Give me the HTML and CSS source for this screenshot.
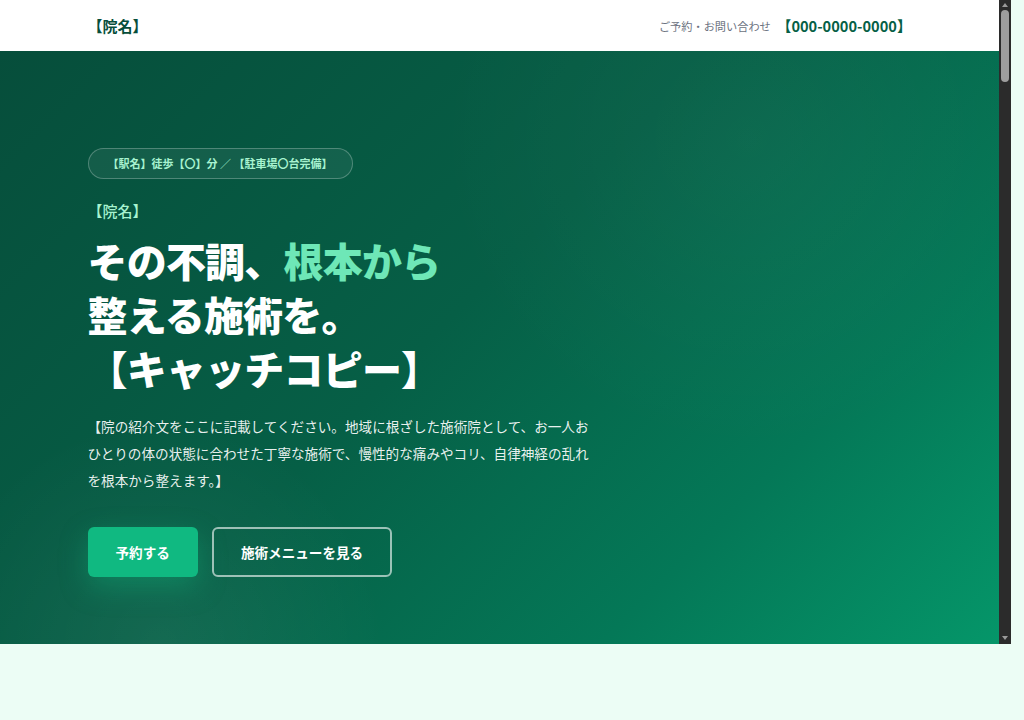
FILE: index.html
```html
<!DOCTYPE html>
<html lang="ja">
<head>
<meta charset="utf-8">
<title>【院名】</title>
<link rel="stylesheet" href="styles.css">
</head>
<body>
<div class="frame">
  <div class="viewport">
    <header class="site-header">
      <div class="container header-inner">
        <div class="logo">【院名】</div>
        <div class="contact">
          <span class="contact-label">ご予約・お問い合わせ</span>
          <span class="contact-tel">【000-0000-0000】</span>
        </div>
      </div>
    </header>

    <section class="hero">
      <div class="container">
        <div class="badge">【駅名】徒歩【〇】分 ／ 【駐車場〇台完備】</div>
        <p class="hero-name">【院名】</p>
        <h1 class="hero-title">その不調、<span class="accent">根本から</span><br>整える施術を。<br>【キャッチコピー】</h1>
        <p class="hero-text">【院の紹介文をここに記載してください。地域に根ざした施術院として、お一人おひとりの体の状態に合わせた丁寧な施術で、慢性的な痛みやコリ、自律神経の乱れを根本から整えます。】</p>
        <div class="hero-actions">
          <a class="btn btn-primary" href="#reserve">予約する</a>
          <a class="btn btn-outline" href="#menu">施術メニューを見る</a>
        </div>
      </div>
    </section>

    <section class="section" id="features" aria-label="当院の特徴"></section>
    <section class="section" id="menu" aria-label="施術メニュー"></section>
    <section class="section" id="voice" aria-label="お客様の声"></section>
    <section class="section" id="access" aria-label="アクセス"></section>
    <section class="section" id="reserve" aria-label="ご予約"></section>
  </div>
  <div class="scrollbar" aria-hidden="true">
    <span class="arrow arrow-up"></span>
    <span class="thumb"></span>
    <span class="track-fill"></span>
    <span class="arrow arrow-down"></span>
  </div>
</div>
</body>
</html>
```

FILE: styles.css
```css
* { box-sizing: border-box; }

html, body {
  margin: 0;
  height: 720px;
  overflow: hidden;
}

body {
  background: #ecfdf5;
  font-family: "Noto Sans CJK JP", "Noto Sans", sans-serif;
  color: #1f2937;
}

.frame {
  display: flex;
  width: 1011px;
  height: 644px;
}

.viewport {
  width: 999px;
  height: 644px;
  overflow-y: scroll;
  scrollbar-width: none;
  background: #ecfdf5;
}

.viewport::-webkit-scrollbar { display: none; }

/* drawn scrollbar */
.scrollbar {
  width: 12px;
  height: 644px;
  background: #2b2b2b;
  display: flex;
  flex-direction: column;
  align-items: center;
  padding: 3px 0 4px;
}

.arrow {
  width: 0;
  height: 0;
  border-left: 3.5px solid transparent;
  border-right: 3.5px solid transparent;
}

.arrow-up { border-bottom: 4px solid #9a9a9a; }
.arrow-down { border-top: 4px solid #9a9a9a; }

.thumb {
  margin-top: 3px;
  width: 8px;
  height: 72px;
  border-radius: 4px;
  background: #9e9e9e;
}

.track-fill { flex: 1; }

.container {
  max-width: 824px;
  margin: 0 auto;
}

/* header */
.site-header {
  background: #ffffff;
  height: 51px;
}

.header-inner {
  height: 100%;
  display: flex;
  align-items: center;
  justify-content: space-between;
}

.logo {
  font-size: 15px;
  font-weight: 700;
  color: #064e3b;
}

.contact {
  display: flex;
  align-items: center;
  gap: 6px;
}

.contact-label {
  font-size: 11.2px;
  color: #6b7280;
}

.contact-tel {
  font-size: 14.6px;
  font-weight: 700;
  color: #065f46;
}

/* hero */
.hero {
  padding: 97px 0 67px;
  color: #ffffff;
  background:
    radial-gradient(circle at 16% 100%, rgba(255, 255, 255, 0.06), rgba(255, 255, 255, 0) 22%),
    radial-gradient(circle at 75% 15%, rgba(255, 255, 255, 0.03), rgba(255, 255, 255, 0) 35%),
    linear-gradient(135deg, #064e3b 0%, #065f46 45%, #047857 75%, #059669 100%);
}

.badge {
  display: inline-block;
  padding: 7px 19px;
  border: 1px solid rgba(255, 255, 255, 0.25);
  background: rgba(255, 255, 255, 0.06);
  border-radius: 999px;
  font-size: 11px;
  line-height: 15px;
  font-weight: 700;
  color: #a7f3d0;
}

.hero-name {
  margin: 21px 0 0;
  font-size: 15px;
  line-height: 22px;
  font-weight: 500;
  color: #a7f3d0;
}

.hero-title {
  margin: 11px 0 0;
  font-size: 40px;
  line-height: 54px;
  font-weight: 900;
  letter-spacing: -0.02em;
  color: #ffffff;
}

.accent {
  color: #6ee7b7;
}

.hero-text {
  margin: 18px 0 0;
  max-width: 512px;
  font-size: 13.6px;
  line-height: 27px;
  color: rgba(255, 255, 255, 0.92);
}

.hero-actions {
  margin-top: 33px;
  display: flex;
  gap: 14px;
}

.btn {
  display: inline-flex;
  align-items: center;
  justify-content: center;
  height: 50px;
  padding: 0 28px;
  border-radius: 6px;
  font-size: 13.6px;
  font-weight: 700;
  color: #ffffff;
  text-decoration: none;
}

.btn-primary {
  background: #10b981;
  box-shadow: 0 10px 28px rgba(16, 185, 129, 0.35);
}

.btn-outline {
  padding: 0 27px;
  border: 2px solid rgba(255, 255, 255, 0.6);
}

/* lower sections */
.section {
  min-height: 980px;
  background: #ecfdf5;
}
```
